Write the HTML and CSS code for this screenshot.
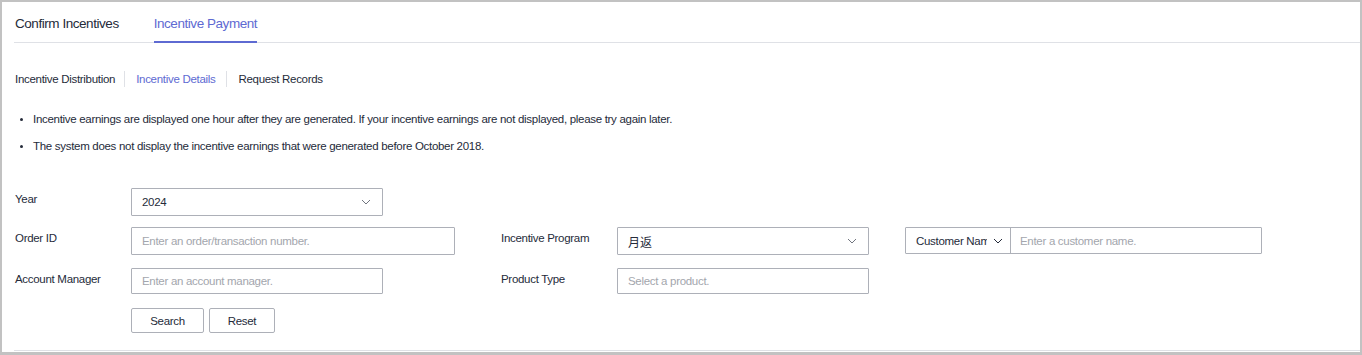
FILE: index.html
```html
<!DOCTYPE html>
<html lang="en">
<head>
<meta charset="utf-8">
<title>Incentive Payment</title>
<link rel="stylesheet" href="styles.css">
</head>
<body>
<div class="frame">
  <div class="tabs">
    <div class="tab">Confirm Incentives</div>
    <div class="tab active">Incentive Payment</div>
  </div>
  <div class="subtabs">
    <div class="subtab">Incentive Distribution</div>
    <div class="subtab active">Incentive Details</div>
    <div class="subtab">Request Records</div>
  </div>
  <ul class="notes">
    <li>Incentive earnings are displayed one hour after they are generated. If your incentive earnings are not displayed, please try again later.</li>
    <li>The system does not display the incentive earnings that were generated before October 2018.</li>
  </ul>
  <div class="form">
    <div class="field r1 c1">
      <div class="label">Year</div>
      <div class="control select w252 h28"><span class="value">2024</span><svg class="chev" width="10" height="6" viewBox="0 0 10 6"><path d="M1 1 L5 5 L9 1" fill="none" stroke="#71757f" stroke-width="1"/></svg></div>
    </div>
    <div class="field r2 c1">
      <div class="label">Order ID</div>
      <div class="control w324 h28"><span class="ph">Enter an order/transaction number.</span></div>
    </div>
    <div class="field r2 c2">
      <div class="label">Incentive Program</div>
      <div class="control select w252 h28"><span class="value cjk">月返</span><svg class="chev" width="10" height="6" viewBox="0 0 10 6"><path d="M1 1 L5 5 L9 1" fill="none" stroke="#71757f" stroke-width="1"/></svg></div>
    </div>
    <div class="field r2 c3">
      <div class="combo h27">
        <div class="combo-sel"><span class="combo-text">Customer Name</span><svg class="chev2" width="10" height="6" viewBox="0 0 10 6"><path d="M1 1 L5 5 L9 1" fill="none" stroke="#252b3a" stroke-width="1"/></svg></div>
        <div class="combo-input"><span class="ph">Enter a customer name.</span></div>
      </div>
    </div>
    <div class="field r3 c1">
      <div class="label">Account Manager</div>
      <div class="control w252 h26"><span class="ph">Enter an account manager.</span></div>
    </div>
    <div class="field r3 c2">
      <div class="label">Product Type</div>
      <div class="control w252 h26"><span class="ph">Select a product.</span></div>
    </div>
    <div class="field r4 c1 buttons">
      <div class="label"></div>
      <button class="btn btn-search">Search</button>
      <button class="btn btn-reset">Reset</button>
    </div>
  </div>
  <div class="bottom-line"></div>
</div>
</body>
</html>
```

FILE: styles.css
```css
* { box-sizing: border-box; }
html, body { margin: 0; padding: 0; background: #ffffff; }
body {
  font-family: "Liberation Sans", Arial, "Noto Sans CJK SC", sans-serif;
  color: #252b3a;
  font-size: 11.5px;
  letter-spacing: -0.3px;
}
.frame {
  width: 1362px;
  height: 355px;
  border-style: solid;
  border-color: #c2c2c2;
  border-width: 2px 2px 3px 2px;
  padding-left: 12px;
  background: #fff;
  display: flex;
  flex-direction: column;
}
.tabs {
  display: flex;
  height: 41px;
  border-bottom: 1px solid #dfe1e6;
  padding-left: 1px;
}
.tab {
  font-size: 13.5px;
  letter-spacing: -0.45px;
  line-height: 39px;
  padding-top: 2px;
  height: 41px;
  margin-right: 35px;
  color: #252b3a;
  border-bottom: 2px solid transparent;
  margin-bottom: -1px;
}
.tab.active {
  color: #5e6ad2;
  border-bottom-color: #5e6ad2;
}
.subtabs {
  display: flex;
  align-items: center;
  margin-top: 28px;
  height: 16px;
  padding-left: 1px;
}
.subtab {
  line-height: 16px;
  padding: 0 11px;
  border-left: 1px solid #dfe1e6;
  color: #252b3a;
}
.subtab:first-child { padding-left: 0; border-left: none; padding-right: 9px; }
.subtab.active { color: #5e6ad2; }
.notes {
  list-style: none;
  margin: 23px 0 0 0;
  padding: 0;
}
.notes li {
  position: relative;
  line-height: 18px;
  padding-left: 19px;
  margin-bottom: 9px;
  color: #252b3a;
}
.notes li::before {
  content: "";
  position: absolute;
  left: 6px;
  top: 8px;
  width: 3px;
  height: 3px;
  border-radius: 50%;
  background: #252b3a;
}
.form {
  margin-top: 24px;
  display: grid;
  grid-template-columns: 486px 404px auto;
  grid-template-rows: 28px 28px 26px 25px;
  row-gap: 12px;
  padding-left: 1px;
}
.r1 { grid-row: 1; }
.r2 { grid-row: 2; margin-top: -1px; }
.r3 { grid-row: 3; }
.r4 { grid-row: 4; margin-top: 2px; }
.c1 { grid-column: 1; }
.c2 { grid-column: 2; }
.c3 { grid-column: 3; }
.field {
  display: flex;
  align-items: flex-start;
}
.label {
  width: 116px;
  flex: none;
  line-height: 18px;
  padding-top: 2px;
  color: #252b3a;
}
.control {
  border: 1px solid #adb0b8;
  border-radius: 1px;
  display: flex;
  align-items: center;
  padding: 0 10px;
}
.w252 { width: 252px; }
.w324 { width: 324px; }
.h28 { height: 28px; }
.h27 { height: 27px; }
.h26 { height: 26px; }
.select { justify-content: space-between; padding-right: 11px; }
.value { color: #252b3a; }
.cjk { font-family: "Noto Sans CJK SC", sans-serif; font-size: 12px; letter-spacing: 0; }
.ph { color: #a3a6ad; }
.chev { display: block; }
.combo {
  display: flex;
  width: 357px;
  border: 1px solid #adb0b8;
  border-radius: 1px;
}
.combo-sel {
  width: 105px;
  flex: none;
  display: flex;
  align-items: center;
  padding-left: 10px;
  border-right: 1px solid #adb0b8;
  overflow: hidden;
}
.combo-text {
  width: 71px;
  overflow: hidden;
  white-space: nowrap;
  flex: none;
}
.chev2 { margin-left: 6px; flex: none; }
.combo-input {
  flex: 1;
  display: flex;
  align-items: center;
  padding-left: 9px;
}
.buttons { align-items: stretch; }
.btn {
  font-family: "Liberation Sans", Arial, sans-serif;
  font-size: 11.5px;
  letter-spacing: -0.3px;
  color: #252b3a;
  background: #fff;
  border: 1px solid #adb0b8;
  border-radius: 2px;
  height: 25px;
  padding: 0;
}
.btn-search { width: 73px; }
.btn-reset { width: 66px; margin-left: 5px; }
.bottom-line {
  margin-top: auto;
  height: 1px;
  background: #dfe1e6;
  margin-bottom: 1px;
}
```
